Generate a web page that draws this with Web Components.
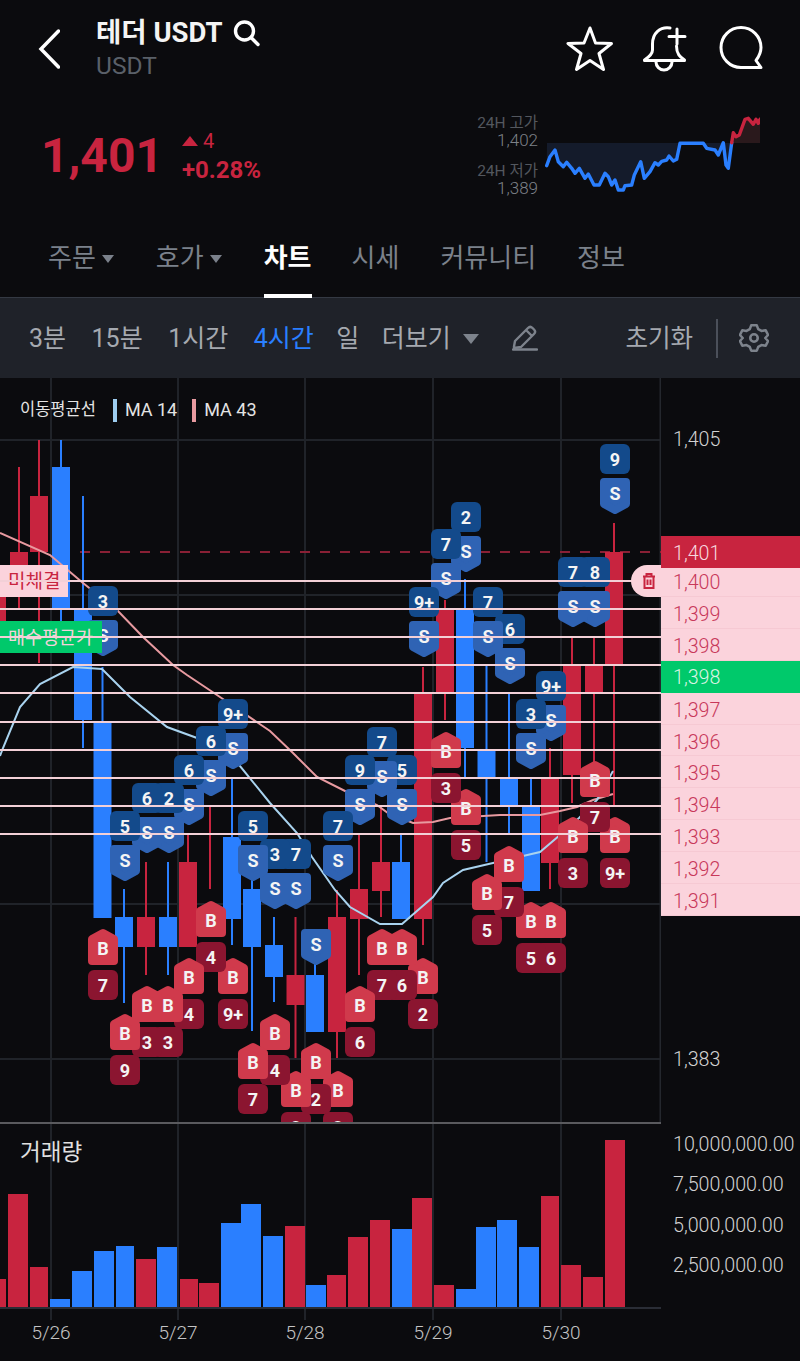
<!DOCTYPE html>
<html lang="ko">
<head>
<meta charset="utf-8">
<title>USDT</title>
<style>
  html, body { margin: 0; padding: 0; background: #0b0b0e; }
  body { width: 800px; height: 1361px; overflow: hidden; font-family: Roboto, "Noto Sans CJK KR", sans-serif; }
</style>
</head>
<body>
<coin-header name="테더 USDT" symbol="USDT"></coin-header>
<price-summary price="1,401" diff="4" rate="+0.28%" high="1,402" low="1,389"></price-summary>
<tab-bar>
  <tab-item caret>주문</tab-item>
  <tab-item caret>호가</tab-item>
  <tab-item active>차트</tab-item>
  <tab-item>시세</tab-item>
  <tab-item>커뮤니티</tab-item>
  <tab-item>정보</tab-item>
</tab-bar>
<chart-toolbar>
  <tool-item>3분</tool-item>
  <tool-item>15분</tool-item>
  <tool-item>1시간</tool-item>
  <tool-item active>4시간</tool-item>
  <tool-item style="margin: 0 -3px">일</tool-item>
  <tool-item caret>더보기</tool-item>
</chart-toolbar>
<candle-panel>
  <chart-legend></chart-legend>
</candle-panel>
<volume-panel></volume-panel>

<script>
  const RED = '#c8243f'
  const BLUE = '#2a7fff'
  const CJK = 'Roboto, "Noto Sans CJK KR", sans-serif'

  class CoinHeader extends HTMLElement {
    connectedCallback() {
      const root = this.attachShadow({ mode: 'open' })
      root.innerHTML = `
        <style>
          :host { display: flex; height: 105px; box-sizing: border-box; padding: 17px 37px 0 38px; align-items: flex-start; font-family: ${CJK}; }
          .back { width: 22px; height: 40px; margin: 12px 36px 0 0; flex: none; }
          .names { flex: 1; }
          .name { display: flex; align-items: center; gap: 10px; height: 32px; color: #f4f4f4; font-size: 27.500px; font-weight: 700; line-height: 32px; }
          .symbol { color: #5a6069; font-size: 24.500px; line-height: 32px; margin-top: 1px; }
          .icons { display: flex; margin-top: 9px; }
          .bell { margin: 0 32px 0 28px; }
          svg { display: block; fill: none; stroke: #fff; stroke-linejoin: round; stroke-linecap: round; }
        </style>
        <svg class="back" viewBox="0 0 22 40" stroke-width="3.5"><path d="M20.500 2 L3 20 L20.500 38" stroke-linejoin="miter"/></svg>
        <div class="names">
          <div class="name"><span>${this.getAttribute('name')}</span>
            <svg width="27" height="27" viewBox="0 0 27 27" stroke-width="3.4"><circle cx="11.500" cy="11" r="9"/><path d="M18 17.500 L25 24.500"/></svg>
          </div>
          <div class="symbol">${this.getAttribute('symbol')}</div>
        </div>
        <div class="icons">
          <svg width="48" height="46" viewBox="0 0 48 46" stroke-width="3"><path d="M24 2 L29.500 17 L45.500 17.500 L33 27.500 L37.500 43.500 L24 34.500 L10.500 43.500 L15 27.500 L2 17.500 L18 17 Z"/></svg>
          <svg class="bell" width="45" height="46" viewBox="0 0 45 46" stroke-width="3"><path d="M28 2 C18 0.500 10.500 7 10.500 18 L10.500 24 C10.500 28 7 31 2.500 34 L2.500 34.500 L42.500 34.500 L42.500 34 C38 31 34.500 28 34.500 20"/><path d="M14 36 A8 8 0 0 0 30 36"/><path d="M35 3 V18 M27 10.500 H43"/></svg>
          <svg width="44" height="44" viewBox="0 0 44 44" stroke-width="3"><path d="M22 41.500 H42 L37 34.500 C40 30.500 42 26 42 21.500 A20 20 0 1 0 22 41.500 Z"/></svg>
        </div>`
    }
  }

  class PriceSummary extends HTMLElement {
    connectedCallback() {
      const up = [[440,497],[450,470],[465,450],[475,485],[490,500],[500,487],[515,505],[525,520],[538,505],[555,535],[565,522],[582,555],[598,555],[615,520],[625,530],[635,555],[645,540],[655,570],[670,570],[675,557],[695,555],[703,525],[722,485],[733,535],[750,515],[765,488],[775,495],[785,484],[800,480],[807,468],[820,483],[830,478],[840,430],[910,430],[920,445],[945,450],[955,465],[970,428],[978,495],[985,505],[995,428]]
      const top = [[995,428],[1000,398],[1008,410],[1018,405],[1035,358],[1045,355],[1060,373],[1068,358],[1075,370],[1080,358]]
      const toPts = a => a.map(p => ((p[0] - 435) / 3).toFixed(1) + ',' + (p[1] / 3 - 111).toFixed(1)).join(' ')
      const root = this.attachShadow({ mode: 'open' })
      root.innerHTML = `
        <style>
          :host { display: flex; height: 110px; box-sizing: border-box; padding: 0 40px 0 41px; align-items: flex-start; font-family: ${CJK}; }
          .price { color: ${RED}; font-size: 48px; font-weight: 700; line-height: 56px; margin-top: 23px; width: 141px; flex: none; }
          .change { flex: 1; margin-top: 24px; color: ${RED}; }
          .diff { display: flex; align-items: center; gap: 5px; font-size: 20px; line-height: 24px; }
          .tri { width: 0; height: 0; border: 8px solid transparent; border-top: 0; border-bottom: 10px solid ${RED}; }
          .rate { font-size: 24px; font-weight: 700; line-height: 28px; margin-top: 3px; }
          .stats { text-align: right; margin: 9px 7px 0 0; color: #7d8188; }
          .stats b { display: block; font-size: 15.500px; line-height: 18px; font-weight: 400; color: #53575e; }
          .stats span { display: block; font-size: 17px; font-weight: 300; line-height: 16px; margin-bottom: 14px; }
          svg { display: block; margin-top: 6px; flex: none; }
        </style>
        <div class="price">${this.getAttribute('price')}</div>
        <div class="change">
          <div class="diff"><span class="tri"></span>${this.getAttribute('diff')}</div>
          <div class="rate">${this.getAttribute('rate')}</div>
        </div>
        <div class="stats">
          <b>24H 고가</b><span>${this.getAttribute('high')}</span>
          <b>24H 저가</b><span>${this.getAttribute('low')}</span>
        </div>
        <svg width="215" height="84" viewBox="0 0 215 84" fill="none">
          <polygon points="2,32 ${toPts(up)} 187,32" fill="#141b2b"/>
          <polygon points="187,32 ${toPts(top)} 215,32" fill="#2a191c"/>
          <polyline points="${toPts(up)}" stroke="${BLUE}" stroke-width="3.4" stroke-linejoin="round" stroke-linecap="round"/>
          <polyline points="${toPts(top)}" stroke="${RED}" stroke-width="3.4" stroke-linejoin="round" stroke-linecap="round"/>
        </svg>`
    }
  }

  class TabBar extends HTMLElement {
    connectedCallback() {
      const root = this.attachShadow({ mode: 'open' })
      root.innerHTML = `
        <style>
          :host { display: flex; height: 82px; box-sizing: border-box; padding-left: 48px; gap: 41px; align-items: stretch; }
        </style>
        <slot></slot>`
    }
  }

  class TabItem extends HTMLElement {
    connectedCallback() {
      const root = this.attachShadow({ mode: 'open' })
      const caret = this.hasAttribute('caret') ? '<span class="caret"></span>' : ''
      root.innerHTML = `
        <style>
          :host { display: flex; align-items: flex-start; gap: 6px; padding-top: 25px; box-sizing: border-box; position: relative; color: #7b818b; font: 400 26px/36px ${CJK}; }
          :host([active]) { color: #fff; font-weight: 700; border-bottom: 4px solid #fff; margin: 0 -1px -1px 0; }
          .caret { width: 0; height: 0; margin: 15px 1px 0 0; border: 6.500px solid transparent; border-bottom: 0; border-top: 8px solid #7b818b; }
        </style>
        <slot></slot>${caret}`
    }
  }

  class ChartToolbar extends HTMLElement {
    connectedCallback() {
      const root = this.attachShadow({ mode: 'open' })
      root.innerHTML = `
        <style>
          :host { display: flex; height: 81px; box-sizing: border-box; padding: 0 31px 0 29px; align-items: center; gap: 25.500px; background: #1f2229; border-top: 1px solid #343943; font-family: ${CJK}; }
          .pencil { margin-left: 8px; }
          .reset { margin: 2px 0 0 auto; color: #a5a9b0; font-size: 24.500px; line-height: 36px; }
          .sep { width: 2px; height: 39px; background: #4b505a; margin: 0 -4px 0 -3px; }
          svg { display: block; fill: none; stroke: #7d838c; stroke-linejoin: round; stroke-linecap: round; }
          slot { display: contents; }
        </style>
        <slot></slot>
        <svg class="pencil" width="26" height="26" viewBox="0 0 26 26" stroke-width="2.400"><path d="M2 21.500 L3 16 L16 3 C17.500 1.500 19 1.500 20.500 3 L22 4.500 C23.500 6 23.500 7.500 22 9 L9 22 L2 23 Z M14 5 L20 11"/><path d="M1 24.500 H25"/></svg>
        <div class="reset">초기화</div>
        <div class="sep"></div>
        <svg width="30" height="30" viewBox="0 0 32 32" stroke-width="2.700"><path d="M13 2.500 H19 L20.500 6.500 L24 8.500 L28.500 7.800 L31 12.800 L28 16 L31 19.200 L28.500 24.200 L24 23.500 L20.500 25.500 L19 29.500 H13 L11.500 25.500 L8 23.500 L3.500 24.200 L1 19.200 L4 16 L1 12.800 L3.500 7.800 L8 8.500 L11.500 6.500 Z"/><circle cx="16" cy="16" r="4"/></svg>`
    }
  }

  class ToolItem extends HTMLElement {
    connectedCallback() {
      const root = this.attachShadow({ mode: 'open' })
      const caret = this.hasAttribute('caret') ? '<span class="caret"></span>' : ''
      root.innerHTML = `
        <style>
          :host { display: flex; align-items: center; gap: 12px; padding-top: 2px; color: #a5a9b0; font: 400 25px/36px ${CJK}; }
          :host([active]) { color: ${BLUE}; }
          .caret { width: 0; height: 0; border: 8px solid transparent; border-bottom: 0; border-top: 10px solid #7d838c; }
        </style>
        <slot></slot>${caret}`
    }
  }

  class ChartLegend extends HTMLElement {
    connectedCallback() {
      const root = this.attachShadow({ mode: 'open' })
      root.innerHTML = `
        <style>
          :host { position: absolute; left: 20px; top: 20px; display: flex; align-items: center; height: 24px; color: #e4e4e4; font: 400 18px/24px ${CJK}; }
          .title { margin-right: 17px; font-size: 16.500px; }
          .bar { width: 4px; height: 23px; margin-right: 8px; }
          .ma { margin-right: 15px; }
        </style>
        <span class="title">이동평균선</span>
        <span class="bar" style="background:#9dcdf0"></span><span class="ma">MA 14</span>
        <span class="bar" style="background:#e89aa0"></span><span class="ma">MA 43</span>`
    }
  }

  // [x, 바디 위, 바디 아래, 꼬리 위, 꼬리 아래, 색]
  const CANDLES = [
    [-3, 580, 640, 580, 640, RED],
    [19, 552, 580, 467, 608, RED],
    [39, 496, 552, 440, 663, RED],
    [61, 467, 610, 440, 625, BLUE],
    [83, 610, 720, 496, 748, BLUE],
    [102.5, 722, 918, 667, 918, BLUE],
    [124, 917, 947, 889, 1003, BLUE],
    [146, 917, 947, 862, 975, RED],
    [168, 917, 947, 862, 975, BLUE],
    [188, 862, 947, 835, 947, RED],
    [210, 889, 889, 807, 889, RED],
    [232, 837, 919, 777, 945, BLUE],
    [252, 889, 947, 860, 1031, BLUE],
    [274, 945, 977, 917, 1002, BLUE],
    [295.5, 975, 1005, 917, 1058, RED],
    [315, 975, 1032, 960, 1032, BLUE],
    [337, 917, 1032, 890, 1058, RED],
    [359, 889, 919, 835, 975, RED],
    [381, 862, 891, 807, 917, RED],
    [401, 862, 919, 835, 919, BLUE],
    [423, 694, 919, 667, 945, RED],
    [445, 610, 692, 600, 720, RED],
    [465, 610, 748, 579, 777, BLUE],
    [486.5, 749, 777, 666, 862, BLUE],
    [509, 777, 805, 693, 833, BLUE],
    [531, 806, 891, 777, 891, BLUE],
    [550, 777, 863, 748, 889, RED],
    [572, 666, 775, 638, 803, RED],
    [594, 666, 692, 638, 765, RED],
    [614, 552, 665, 523, 806, RED]
  ]

  const MA43 = '0,533 50,555 83,583 117,610 143,637 173,665 187,675 217,695 270,731 293,753 317,777 347,792 377,805 388,813 413,823 433,822 450,818 500,815 540,815 560,811 577,807 593,800 613,794'
  const MA14 = '0,756 3,748 20,707 40,684 73,667 102,669 130,697 167,727 197,738 240,766 270,803 297,833 312,857 335,890 350,907 380,924 402,924 433,897 443,883 463,870 493,863 540,852 560,835 579,818 597,800 613,771'

  // [x, 위 y, 숫자(없으면 null), 'S' | 'B']
  const MARKS = [
    [103,586,'3','S'],[125,811,'5','S'],[147,783,'6','S'],[169,783,'2','S'],[189,755,'6','S'],[211,726,'6','S'],[233,699,'9+','S'],
    [253,811,'5','S'],[275,839,'3','S'],[296,839,'7','S'],[316,895,null,'S'],[338,811,'7','S'],[360,755,'9','S'],[382,727,'7','S'],
    [402,755,'5','S'],[424,587,'9+','S'],[446,529,'7','S'],[466,502,'2','S'],[488,587,'7','S'],[510,614,'6','S'],[531,699,'3','S'],
    [551,671,'9+','S'],[573,557,'7','S'],[595,557,'8','S'],[615,444,'9','S'],
    [103,929,'7','B'],[125,1014,'9','B'],[147,986,'3','B'],[168,986,'3','B'],[189,958,'4','B'],[211,901,'4','B'],[233,958,'9+','B'],
    [253,1043,'7','B'],[275,1014,'4','B'],[296,1071,'3','B'],[316,1043,'2','B'],[338,1071,'3','B'],[360,986,'6','B'],[382,929,'7','B'],
    [402,929,'6','B'],[423,958,'2','B'],[446,732,'3','B'],[466,789,'5','B'],[487,874,'5','B'],[509,846,'7','B'],[531,902,'5','B'],
    [551,902,'6','B'],[573,817,'3','B'],[595,761,'7','B'],[615,817,'9+','B']
  ]

  const GRID_X = [51, 178, 305, 433, 561]
  const labelAttr = 'text-anchor="middle" font-family="Roboto, sans-serif" font-weight="700" font-size="18" fill="#f4f4f4"'

  function markSvg(m) {
    const [x, y, n, kind] = m
    if (kind === 'S') {
      const num = n ? `<rect x="${x-15}" y="${y}" width="30" height="30" rx="6" fill="#134a8b"/><text x="${x}" y="${y+21.5}" ${labelAttr}>${n}</text>` : ''
      const t = y + 34
      return num + `<polygon points="${x-11},${t+4} ${x+11},${t+4} ${x+11},${t+26} ${x},${t+32} ${x-11},${t+26}" fill="#2f63b4" stroke="#2f63b4" stroke-width="8" stroke-linejoin="round"/><text x="${x}" y="${t+21.5}" ${labelAttr}>S</text>`
    }
    const b = y + 41
    return `<polygon points="${x},${y+4} ${x+11},${y+10} ${x+11},${y+32} ${x-11},${y+32} ${x-11},${y+10}" fill="#d03a4c" stroke="#d03a4c" stroke-width="8" stroke-linejoin="round"/><text x="${x}" y="${y+26}" ${labelAttr}>B</text>` +
      `<rect x="${x-15}" y="${b}" width="30" height="30" rx="6" fill="#8b1530"/><text x="${x}" y="${b+21.5}" ${labelAttr}>${n}</text>`
  }

  class CandlePanel extends HTMLElement {
    connectedCallback() {
      const lines = [581, 609, 637, 665, 693, 722, 750, 778, 806, 834]
      let s = ''
      for (const y of [440, 595, 750, 904, 1059]) s += `<line x1="0" y1="${y}" x2="661" y2="${y}" stroke="#202329" stroke-width="2"/>`
      for (const x of GRID_X) s += `<line x1="${x}" y1="378" x2="${x}" y2="1124" stroke="#202329" stroke-width="2"/>`
      s += '<line x1="660.500" y1="378" x2="660.500" y2="1124" stroke="#24272d" stroke-width="2"/>'
      s += `<line x1="80" y1="552" x2="661" y2="552" stroke="#8a2035" stroke-width="2" stroke-dasharray="10 10"/>`
      for (const c of CANDLES) {
        s += `<line x1="${c[0]}" y1="${c[3]}" x2="${c[0]}" y2="${c[4]}" stroke="${c[5]}" stroke-width="2"/>`
        s += `<rect x="${c[0]-9}" y="${c[1]}" width="18" height="${c[2]-c[1]}" fill="${c[5]}"/>`
      }
      s += `<polyline points="${MA43}" fill="none" stroke="#e89aa0" stroke-width="2"/>`
      s += `<polyline points="${MA14}" fill="none" stroke="#a9d3ef" stroke-width="2"/>`
      // 오른쪽 마커부터 그려서 왼쪽이 위로 오게 한다
      s += MARKS.slice().sort((a, b) => b[0] - a[0]).map(markSvg).join('')
      s += `<rect x="0" y="565" width="68" height="32" fill="#fbd3dc"/><text x="8" y="588" font-size="19" font-family='"Noto Sans CJK KR", sans-serif' fill="${RED}">미체결</text>`
      s += `<rect x="0" y="621" width="102" height="32" fill="#00c96b"/><text x="8" y="644" font-size="18.500" font-family='"Noto Sans CJK KR", sans-serif' fill="#f3d3da">매수평균가</text>`
      for (const y of lines) s += `<line x1="0" y1="${y}" x2="661" y2="${y}" stroke="#f3d0d7" stroke-width="2"/>`
      s += '<line x1="0" y1="1123" x2="661" y2="1123" stroke="#5a5a5e" stroke-width="2"/>'
      s += `<line x1="661" y1="440" x2="668" y2="440" stroke="#202329" stroke-width="2"/><line x1="661" y1="1059" x2="668" y2="1059" stroke="#202329" stroke-width="2"/>`

      const root = this.attachShadow({ mode: 'open' })
      root.innerHTML = `
        <style>
          :host { display: grid; grid-template-columns: 661px 139px; height: 746px; position: relative; font-family: ${CJK}; }
          svg.plot { display: block; }
          .pill { position: absolute; left: 631px; top: 187px; width: 30px; height: 32px; box-sizing: border-box; padding: 8px 0 0 11px; background: #fbd3dc; border-radius: 16px 0 0 16px; }
          .pill svg { display: block; fill: none; stroke: ${RED}; stroke-width: 2; }
          .axis { display: flex; flex-direction: column; color: #d2d2d2; font-size: 19.700px; font-weight: 300; }
          .axis div { height: 31.900px; line-height: 35px; padding-left: 12px; box-sizing: border-box; flex: none; }
          .axis .first { margin-top: 45px; margin-bottom: 81px; height: 32px; line-height: 34px; }
          .axis .last { margin-top: 126px; height: 32px; line-height: 36px; }
          .axis .row { background: #fbd3dc; color: #c8385a; border-bottom: 1px solid #f6c9d3; }
          .axis .now { background: ${RED}; color: #f7d9df; height: 32px; line-height: 36px; }
          .axis .top { height: 29px; line-height: 30px; }
          .axis .avg { background: #00c96b; color: #d9f3e4; line-height: 33px; }
        </style>
        <svg class="plot" width="661" height="746" viewBox="0 378 661 746">${s}</svg>
        <div class="axis">
          <div class="first">1,405</div>
          <div class="now">1,401</div>
          <div class="row top">1,400</div>
          <div class="row">1,399</div>
          <div class="row">1,398</div>
          <div class="avg">1,398</div>
          <div class="row">1,397</div>
          <div class="row">1,396</div>
          <div class="row">1,395</div>
          <div class="row">1,394</div>
          <div class="row">1,393</div>
          <div class="row">1,392</div>
          <div class="row">1,391</div>
          <div class="last">1,383</div>
        </div>
        <div class="pill"><svg width="14" height="16" viewBox="0 0 14 16"><path d="M1 3.500 H13 M4.500 3.500 V1 H9.500 V3.500 M2.500 3.500 V15 H11.500 V3.500 M5.500 6.500 V12 M8.500 6.500 V12"/></svg></div>
        <slot></slot>`
    }
  }

  // [왼쪽, 오른쪽, 높이 시작 y, 색]
  const VOLUMES = [
    [0,6,1279,RED],[8,28,1194,RED],[30,48,1267,RED],[50,70,1299,BLUE],[72,92,1271,BLUE],[94,114,1251,BLUE],[116,134,1246,BLUE],
    [136,156,1259,RED],[157,177,1247,BLUE],[180,198,1279,RED],[199,219,1283,RED],[221,241,1223,BLUE],[241,261,1204,BLUE],[263,283,1236,BLUE],
    [285,305,1226,RED],[306,326,1285,BLUE],[327,346,1275,RED],[348,368,1237,RED],[370,390,1220,RED],[392,412,1229,BLUE],[412,432,1198,RED],
    [434,454,1285,RED],[456,476,1289,BLUE],[476,496,1227,BLUE],[497,517,1220,BLUE],[519,539,1247,BLUE],[541,559,1196,RED],[561,581,1265,RED],
    [583,603,1277,RED],[605,625,1140,RED]
  ]

  class VolumePanel extends HTMLElement {
    connectedCallback() {
      const dates = ['5/26', '5/27', '5/28', '5/29', '5/30']
      let s = ''
      for (const x of GRID_X) s += `<line x1="${x}" y1="1124" x2="${x}" y2="1320" stroke="#202329" stroke-width="2"/>`
      s += '<line x1="0" y1="1308" x2="661" y2="1308" stroke="#2a2d36" stroke-width="2"/>'
      for (const v of VOLUMES) s += `<rect x="${v[0]}" y="${v[2]}" width="${v[1]-v[0]}" height="${1307-v[2]}" fill="${v[3]}"/>`
      dates.forEach((d, i) => {
        s += `<text x="${GRID_X[i]}" y="1339" text-anchor="middle" font-family="Roboto, sans-serif" font-size="19" font-weight="300" fill="#c4c4c4">${d}</text>`
      })
      const root = this.attachShadow({ mode: 'open' })
      root.innerHTML = `
        <style>
          :host { display: grid; grid-template-columns: 661px 139px; height: 237px; position: relative; font-family: ${CJK}; }
          svg { display: block; }
          .title { position: absolute; left: 20px; top: 12px; color: #e0e0e0; font-size: 22.500px; line-height: 32px; }
          .axis { padding-top: 1px; color: #d2d2d2; font-size: 19.700px; font-weight: 300; }
          .axis div { height: 40.300px; line-height: 40px; padding-left: 12px; white-space: nowrap; }
        </style>
        <svg width="661" height="237" viewBox="0 1124 661 237">${s}</svg>
        <div class="axis">
          <div>10,000,000.00</div>
          <div>7,500,000.00</div>
          <div>5,000,000.00</div>
          <div>2,500,000.00</div>
        </div>
        <div class="title">거래량</div>`
    }
  }

  customElements.define('coin-header', CoinHeader)
  customElements.define('price-summary', PriceSummary)
  customElements.define('tab-bar', TabBar)
  customElements.define('tab-item', TabItem)
  customElements.define('chart-toolbar', ChartToolbar)
  customElements.define('tool-item', ToolItem)
  customElements.define('chart-legend', ChartLegend)
  customElements.define('candle-panel', CandlePanel)
  customElements.define('volume-panel', VolumePanel)
</script>
</body>
</html>
